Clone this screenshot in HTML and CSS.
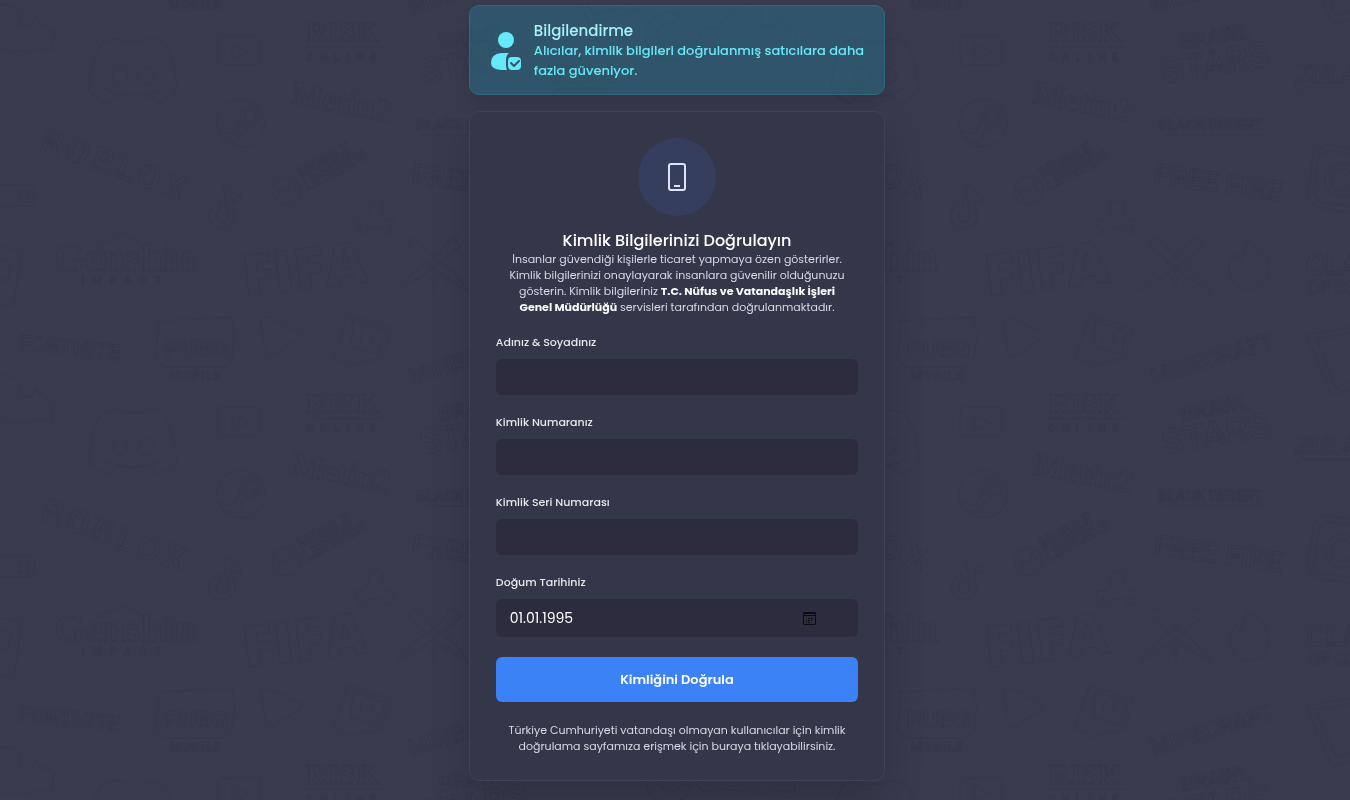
FILE: index.html
```html
<!DOCTYPE html>
<html lang="tr">
<head>
<meta charset="utf-8">
<meta name="viewport" content="width=device-width, initial-scale=1">
<title>Kimlik Bilgilerinizi Doğrulayın</title>
<link rel="stylesheet" href="styles.css">
</head>
<body>
<svg class="backdrop" aria-hidden="true">
  <defs>
    <g id="logos">
      <path d="M103 42q8-4 16-3l3 3h22l3-3q8-1 16 3 10 14 14 46-2 9-20 16l-6-8h-36l-6 8q-16-6-20-14 2-34 14-48zM103 88q30 16 60 0"/>
      <circle cx="120" cy="76" r="8"/><circle cx="146" cy="76" r="8"/>
      <rect x="218" y="36" width="42" height="29" rx="4"/><path d="M232 43v17l16-8z"/>
      <text x="306" y="42" font-size="30" class="serif">RISK</text><path d="M306 47h78"/><text x="306" y="61" font-size="10" letter-spacing="7">ONLINE</text>
      <text transform="translate(290 103) rotate(11)" font-size="33" class="serif">Metin2</text>
      <circle cx="241" cy="123" r="24"/><circle cx="250" cy="116" r="10"/><circle cx="250" cy="116" r="6"/><path d="M218 130l12 4q8-2 10-16M260 120l-18 12q-2 10-10 10l-10-6"/>
      <text transform="translate(39 149) rotate(20)" font-size="33" letter-spacing="5">ROBLOX</text>
      <g transform="translate(278 204) rotate(-28)"><circle cx="14" cy="-8" r="14"/><path d="M6-2v-12l8 8 8-8v12"/><text x="32" y="-12" font-size="16">MOBILE</text><text x="32" y="2" font-size="16">LEGENDS</text></g>
      <path d="M223 186h7q2 9 11 9v7q-6 0-9-3l3 17a13 13 0 1 1-14-13v7a6 6 0 1 0 7 6z"/>
      <path d="M372 200h8l4 5-4 5 7 10h7v7h-5l3 6-6 1-4-6h-14l-4 6-6-1 3-6h-6v-7h8l7-10-3-5z"/>
      <text x="54" y="271" font-size="40" class="serif">Genshin</text><path d="M98 246q20-10 26-13 8 8 28 13"/><text x="81" y="284" font-size="11" letter-spacing="8">IMPACT</text>
      <text transform="translate(245 297) rotate(-7)" font-size="58" class="wide">FIFA</text>
      <text transform="translate(18 350) rotate(6)" font-size="22">FORTNITE</text>
      <path d="M157 321l76-4-1 12 3 4-3 26-8 8h-60l-9-8 3-26z"/><text x="165" y="357" font-size="24">PUBG</text><text x="169" y="380" font-size="13" letter-spacing="1">MOBILE</text>
      <path d="M265 317q-5 0-4 5l5 31q1 5 6 3l28-18q3-3-1-6l-30-15z"/>
      <path d="M348 314l43 15-9 30-20 3-11 4-18-9zM353 320l32 12-6 22-28-8zM363 329l-3 13M373 333l-3 12"/>
      <text transform="translate(411 385) rotate(-17)" font-size="23">MINECRAFT</text>
      <text transform="translate(440 50) rotate(-10)" font-size="21">BRAWL</text><text transform="translate(422 84) rotate(-10)" font-size="35">STARS</text>
      <text transform="translate(552 83) skewX(-12)" font-size="25">ZULA</text><path d="M552 97l6-9h56"/>
      <text x="416" y="130" font-size="15">BLACK DESERT</text><path d="M420 135h104"/>
      <text transform="translate(411 183) rotate(8)" font-size="28">FREE FIRE</text>
      <g transform="rotate(8 600 180)"><rect x="568" y="147" width="64" height="64" rx="15"/><rect x="574" y="153" width="52" height="52" rx="11"/><circle cx="600" cy="180" r="17"/><circle cx="600" cy="180" r="11"/></g>
      <path d="M397 291q20-26 36-32l20-22 8 9-30 24zM470 293q-18-26-34-34l-22-22-7 8 28 24zM418 280l8-7 7 10 6-10 7 8 5-7M434 259v35"/>
      <path d="M505 241q20 8 22 26a20 20 0 1 1-39-4l5-9 6 6z"/>
      <text x="564" y="275" font-size="29">CLASH</text><text x="566" y="294" font-size="18">OF CLANS</text>
      <path d="M564 335l44-8 30 54-48 14zM574 339l36-6 20 42-36 12z"/>
      <path d="M0 5q20-2 20 14l-2 7 14 0 4-8 6 7 12 6-2 20-14-3-12 4-10-2-6 2-10-3M742 5q-14 2-16 14l-8 8-16 3-6 12 8 8 18-3 20 2"/>
      <path d="M680 15a24 24 0 1 0 12 30l-10-3a13 13 0 1 1-6-18z"/>
      <path d="M0 185h30l5 4-2 17H0M20 190l9 2-1 10-9-1z"/>
      <path d="M0 247l22 3-8 54-14 2M0 259l12 2-5 20-7-2"/>
    </g>
    <pattern id="tile" width="742" height="371" patternUnits="userSpaceOnUse">
      <use href="#logos"/><use href="#logos" y="-371"/>
    </pattern>
  </defs>
  <rect class="backdrop-fill" width="100%" height="100%" fill="url(#tile)"/>
</svg>

<main class="page">
  <aside class="notice">
    <svg class="notice-icon" viewBox="0 0 32 40" aria-hidden="true">
      <circle cx="16" cy="9" r="8" fill="#67e8f9"/>
      <path d="M11 22h8q-3 2-3 7v5q0 3 1 5h-6q-10-1-10-7 0-9 10-10z" fill="#67e8f9"/>
      <rect x="18" y="26" width="13" height="13" rx="4" fill="#67e8f9"/>
      <path d="M21 32l3 3 5-5" fill="none" stroke="#2f556b" stroke-width="2" stroke-linecap="round" stroke-linejoin="round"/>
    </svg>
    <div>
      <h2 class="notice-title">Bilgilendirme</h2>
      <p class="notice-text">Alıcılar, kimlik bilgileri doğrulanmış satıcılara daha<br>fazla güveniyor.</p>
    </div>
  </aside>

  <form class="card">
    <div class="badge">
      <svg width="20" height="30" viewBox="0 0 20 30" fill="none" stroke="#dfe3f5" stroke-width="2" aria-hidden="true">
        <rect x="2" y="2" width="16" height="26" rx="2"/><path d="M7 24h6"/>
      </svg>
    </div>
    <h1 class="title">Kimlik Bilgilerinizi Doğrulayın</h1>
    <p class="intro">İnsanlar güvendiği kişilerle ticaret yapmaya özen gösterirler.<br>Kimlik bilgilerinizi onaylayarak insanlara güvenilir olduğunuzu<br>gösterin. Kimlik bilgileriniz <strong>T.C. Nüfus ve Vatandaşlık İşleri<br>Genel Müdürlüğü</strong> servisleri tarafından doğrulanmaktadır.</p>

    <label class="label" for="name">Adınız &amp; Soyadınız</label>
    <input class="input" id="name" type="text">
    <label class="label" for="number">Kimlik Numaranız</label>
    <input class="input" id="number" type="text">
    <label class="label" for="serial">Kimlik Seri Numarası</label>
    <input class="input" id="serial" type="text">
    <label class="label" for="birth">Doğum Tarihiniz</label>
    <div class="date">
      <input class="date-value" id="birth" type="text" value="01.01.1995">
      <button class="date-button" type="button" aria-label="Takvimi aç">
        <svg width="13" height="13" viewBox="0 0 13 13" aria-hidden="true">
          <path d="M1 0h11l1 1v11l-1 1H1l-1-1V1zM1 4v8h11V4zM1 2v1h11V2z" fill="#0b0b10" fill-rule="evenodd"/>
          <path d="M5 6h2v1H5zM8 6h2v1H8zM3 8h1v1H3zM5 8h2v1H5zM8 8h1v1H8zM3 10h1v1H3zM5 10h2v1H5z" fill="#0b0b10"/>
        </svg>
      </button>
    </div>
    <button class="submit" type="submit">Kimliğini Doğrula</button>
    <p class="foot">Türkiye Cumhuriyeti vatandaşı olmayan kullanıcılar için kimlik<br>doğrulama sayfamıza erişmek için buraya tıklayabilirsiniz.</p>
  </form>
</main>
</body>
</html>
```
FILE: styles.css
```css
* { box-sizing: border-box; }

body {
  margin: 0;
  min-height: 100vh;
  background: #393a4e;
  color: #e5e7eb;
  font-family: Poppins, Inter, "Open Sans", sans-serif;
}

h1, h2, p { margin: 0; }

.backdrop {
  position: fixed;
  inset: 0;
  z-index: -1;
  width: 100%;
  height: 100%;
  fill: none;
  stroke: #36384b;
  stroke-width: 2;
}
.backdrop-fill { stroke: none; }
.backdrop text { font-family: Roboto, sans-serif; font-weight: 700; stroke: #343649; stroke-width: 1; }
.backdrop .serif { font-family: "Liberation Serif", serif; }
.backdrop .wide { font-family: "Open Sans", sans-serif; font-weight: 800; }

.page {
  display: flex;
  flex-direction: column;
  gap: 16px;
  width: fit-content;
  min-width: min(416px, 100%);
  margin: 0 auto;
  padding: 5px 0 19px;
}

.notice {
  display: flex;
  align-items: center;
  gap: 12px;
  padding: 14px 20px;
  border: 1px solid #2c6a80;
  border-radius: 10px;
  background: rgba(34, 124, 148, 0.4);
  box-shadow: 0 10px 15px rgba(0, 0, 0, 0.1);
  font-weight: 500;
}
.notice-icon { flex: none; width: 32px; height: 40px; }
.notice-title { color: #a5f3fc; font-size: 15px; font-weight: 500; line-height: 21px; }
.notice-text { color: #67e8f9; font-size: 13px; line-height: 20px; white-space: nowrap; }
.notice { padding: 14px 20px 13px; }

.card {
  display: flex;
  flex-direction: column;
  padding: 26px;
  border: 1px solid #3f4155;
  border-radius: 10px;
  background: #343649;
  box-shadow: 0 20px 40px rgba(0, 0, 0, 0.16);
}

.badge {
  display: grid;
  place-items: center;
  align-self: center;
  width: 78px;
  height: 78px;
  border-radius: 50%;
  background: #353f5d;
}

.title {
  margin-top: 14px;
  color: #fff;
  font-size: 16px;
  font-weight: 500;
  line-height: 21px;
  text-align: center;
}

.intro, .foot {
  color: #d8dbe2;
  font-size: 11px;
  line-height: 16px;
  text-align: center;
  white-space: nowrap;
}
.intro strong { color: #f9fafb; font-weight: 700; }

.label {
  margin: 18px 0 8px;
  font-size: 11px;
  font-weight: 500;
  line-height: 18px;
}

.input, .date {
  width: 100%;
  height: 36px;
  padding: 0 14px;
  border: 0;
  border-radius: 6px;
  background: #2c2c3e;
  color: #fff;
  font: 400 14px Poppins, Inter, sans-serif;
}
.date { display: flex; align-items: center; height: 38px; padding-right: 42px; }
.date-value { flex: 1; min-width: 0; padding: 0; border: 0; background: none; color: inherit; font: inherit; }
.date-button { display: flex; padding: 0; border: 0; background: none; }

.submit {
  height: 45px;
  margin: 20px 0;
  border: 0;
  border-radius: 6px;
  background: #3b82f6;
  color: #fff;
  font: 600 13px Poppins, Inter, sans-serif;
}

@media (min-width: 600px) {
  body { padding-left: 4px; }
}
```
